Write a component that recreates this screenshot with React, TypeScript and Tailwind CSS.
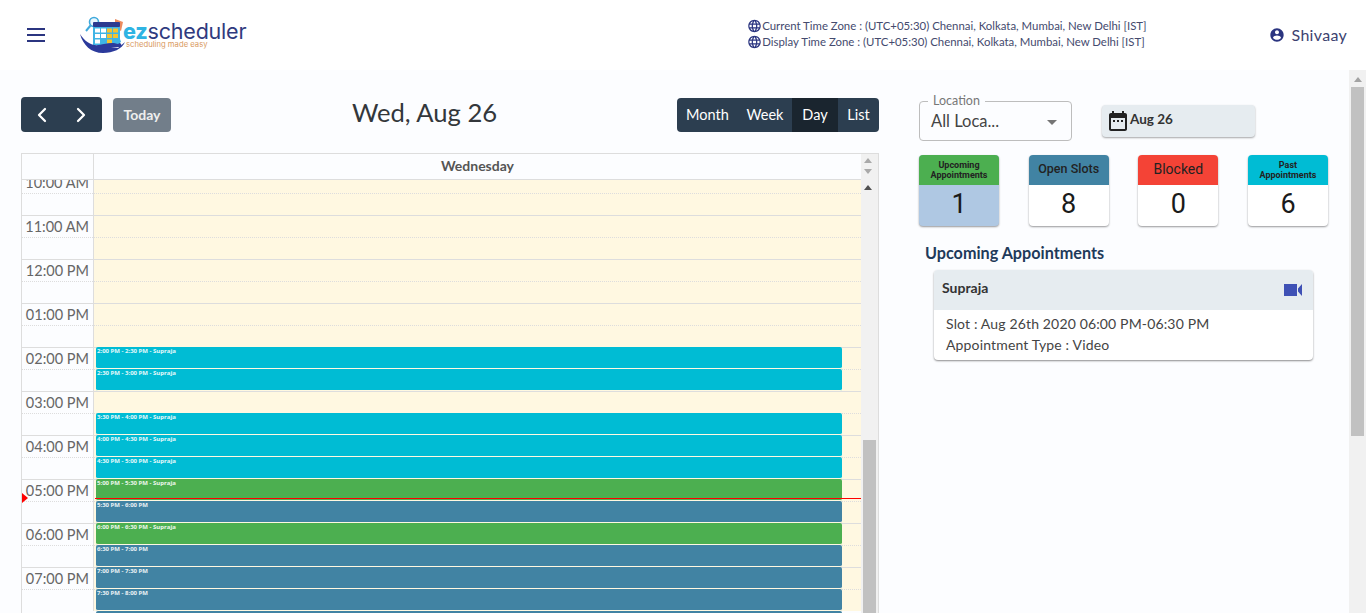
import { ChevronLeft, ChevronRight } from 'lucide-react';

const hours = ['10:00 AM', '11:00 AM', '12:00 PM', '01:00 PM', '02:00 PM', '03:00 PM', '04:00 PM', '05:00 PM', '06:00 PM', '07:00 PM'];

const stats = [
  { title: 'Upcoming Appointments', count: 1, head: 'bg-[#4caf50]', body: 'bg-[#afc8e3]', text: 'px-[8px] text-[9px] font-bold leading-[10px]' },
  { title: 'Open Slots', count: 8, head: 'bg-[#4183a3]', body: 'bg-white', text: 'text-[12.5px] font-medium' },
  { title: 'Blocked', count: 0, head: 'bg-[#f44336]', body: 'bg-white', text: 'text-[14px] font-normal' },
  { title: 'Past Appointments', count: 6, head: 'bg-[#00bcd4]', body: 'bg-white', text: 'px-[8px] text-[9px] font-bold leading-[10px]' },
];

// half hour slots, starting at 2 PM; null leaves the slot empty
const slots = [
  { label: '2:00 PM - 2:30 PM - Supraja', color: 'bg-[#00bcd4]' },
  { label: '2:30 PM - 3:00 PM - Supraja', color: 'bg-[#00bcd4]' },
  null,
  { label: '3:30 PM - 4:00 PM - Supraja', color: 'bg-[#00bcd4]' },
  { label: '4:00 PM - 4:30 PM - Supraja', color: 'bg-[#00bcd4]' },
  { label: '4:30 PM - 5:00 PM - Supraja', color: 'bg-[#00bcd4]' },
  { label: '5:00 PM - 5:30 PM - Supraja', color: 'bg-[#4caf50]' },
  { label: '5:30 PM - 6:00 PM', color: 'bg-[#4183a3]' },
  { label: '6:00 PM - 6:30 PM - Supraja', color: 'bg-[#4caf50]' },
  { label: '6:30 PM - 7:00 PM', color: 'bg-[#4183a3]' },
  { label: '7:00 PM - 7:30 PM', color: 'bg-[#4183a3]' },
  { label: '7:30 PM - 8:00 PM', color: 'bg-[#4183a3]' },
  { label: '', color: 'bg-[#4183a3]' },
];

function GlobeIcon() {
  return (
    <svg viewBox="0 0 24 24" className="h-[16px] w-[15px] shrink-0 fill-[#2b3580]">
      <path d="M11.99 2C6.47 2 2 6.48 2 12s4.47 10 9.99 10C17.52 22 22 17.52 22 12S17.52 2 11.99 2zm6.93 6h-2.95c-.32-1.25-.78-2.45-1.38-3.56 1.84.63 3.37 1.91 4.33 3.56zM12 4.04c.83 1.2 1.48 2.53 1.91 3.96h-3.82c.43-1.43 1.08-2.76 1.91-3.96zM4.26 14C4.1 13.36 4 12.69 4 12s.1-1.36.26-2h3.38c-.08.66-.14 1.32-.14 2s.06 1.34.14 2H4.26zm.82 2h2.95c.32 1.25.78 2.45 1.38 3.56-1.84-.63-3.37-1.9-4.33-3.56zm2.95-8H5.08c.96-1.66 2.49-2.93 4.33-3.56C8.81 5.55 8.35 6.75 8.03 8zM12 19.96c-.83-1.2-1.48-2.53-1.91-3.96h3.82c-.43 1.43-1.08 2.76-1.91 3.96zM14.34 14H9.66c-.09-.66-.16-1.32-.16-2s.07-1.35.16-2h4.68c.09.65.16 1.32.16 2s-.07 1.34-.16 2zm.25 5.56c.6-1.11 1.06-2.31 1.38-3.56h2.95c-.96 1.65-2.49 2.93-4.33 3.56zM16.36 14c.08-.66.14-1.32.14-2s-.06-1.34-.14-2h3.38c.16.64.26 1.31.26 2s-.1 1.36-.26 2h-3.38z" />
    </svg>
  );
}

function Logo() {
  return (
    <div className="flex items-center">
      <svg viewBox="0 0 46 38" className="h-[38px] w-[46px] shrink-0">
        <circle cx="14" cy="6" r="4.5" fill="#eaf7fd" stroke="#3fa9dc" strokeWidth="1.6" />
        <path d="M10.5 9.5 L6 15" stroke="#3fa9dc" strokeWidth="2" />
        <path d="M35 3 L43 6 L41 15 L35 11 Z" fill="#ec8b5e" />
        <rect x="13" y="6" width="27" height="5" rx="1" fill="#2b3a8f" />
        <rect x="13" y="11" width="27" height="18" fill="#3fb4e5" />
        <g fill="#fff">
          <rect x="15" y="12.5" width="5" height="4" />
          <rect x="21" y="12.5" width="5" height="4" />
          <rect x="15" y="18" width="5" height="4" />
          <rect x="21" y="18" width="5" height="4" />
          <rect x="15" y="23.5" width="5" height="4" />
        </g>
        <g fill="#f4c430">
          <rect x="27" y="12.5" width="5" height="4" />
          <rect x="33" y="12.5" width="5" height="4" />
          <rect x="27" y="18" width="5" height="4" />
          <rect x="33" y="18" width="5" height="4" />
          <rect x="27" y="23.5" width="5" height="4" />
        </g>
        <path d="M0 18 C5 26 12 30 19 29 C24 28 27 27 32 27 L39 27 C42 27 42 30 39 31 L31 32 L38 32 L45 26 C42 33 33 37 23 37 C11 37 3 29 0 18 Z" fill="#2b3a9b" />
        <path d="M34 27 L40 23 L41 26 L38 28 Z" fill="#3fb4e5" />
      </svg>
      <div className="-ml-[3px] flex flex-col font-['Inter',sans-serif] leading-none">
        <div className="text-[21.5px] font-normal leading-[20px] tracking-[-0.2px] text-[#2f3a7e]">
          <span className="font-extrabold text-[#2fb4e3]">ez</span>scheduler
        </div>
        <div className="pl-[3px] text-[7.7px] leading-[8px] text-[#d99a62]">scheduling made easy</div>
      </div>
    </div>
  );
}

function TimeGrid() {
  return (
    <div className="relative h-[433px] overflow-hidden">
      {hours.map((hour, i) => (
        <div key={hour} className={`flex h-[44px] border-t border-[#ddd] ${i === 0 ? '-mt-[9px]' : ''}`}>
          <div className="flex w-[72px] shrink-0 flex-col border-r border-[#ddd]">
            <div className="h-[21px] whitespace-nowrap pr-[4px] pt-[1px] text-right text-[14.5px] leading-[20px] text-[#666]">{hour}</div>
            <div className="border-t border-dotted border-[#ddd]" />
          </div>
          <div className="flex-1 bg-[#fff8e1]">
            <div className="mt-[21px] border-t border-dotted border-[#ddd]" />
          </div>
        </div>
      ))}
      <div className="absolute left-[74px] right-[19px] top-[167px] flex flex-col">
        {slots.map((slot, i) =>
          slot ? (
            <div key={i} className={`h-[22px] overflow-hidden rounded-[2px] border-b border-[#fff8e1] pl-[1px] font-['Open_Sans',sans-serif] text-[6px] font-bold leading-[9px] text-white/90 ${slot.color}`}>
              {slot.label}
            </div>
          ) : (
            <div key={i} className="h-[22px]" />
          ),
        )}
      </div>
      {/* now indicator */}
      <div className="absolute left-[73px] right-0 top-[318px] h-px bg-[#ff0000]" />
      <div className="absolute left-0 top-[313px] h-0 w-0 border-y-[5px] border-l-[6px] border-y-transparent border-l-[#ff0000]" />
    </div>
  );
}

export default function App() {
  return (
    <div className="flex h-[613px] w-[1366px] flex-col overflow-hidden bg-white font-['Lato','Open_Sans',sans-serif] text-[#333]">
      <header className="flex h-[70px] shrink-0 items-center pl-[27px] pr-[19px]">
        <div className="flex w-[18px] flex-col gap-[4px]">
          <span className="h-[2px] bg-[#2b3580]" />
          <span className="h-[2px] bg-[#2b3580]" />
          <span className="h-[2px] bg-[#2b3580]" />
        </div>
        <div className="ml-[35px]">
          <Logo />
        </div>
        <div className="ml-auto flex flex-col pb-[2px] text-[11.4px] leading-[16px] text-[#444a6e]">
          <div className="flex items-center"><GlobeIcon />Current Time Zone : (UTC+05:30) Chennai, Kolkata, Mumbai, New Delhi [IST]</div>
          <div className="flex items-center"><GlobeIcon />Display Time Zone : (UTC+05:30) Chennai, Kolkata, Mumbai, New Delhi [IST]</div>
        </div>
        <div className="ml-[122px] flex items-center gap-[7px] text-[16px] tracking-[0.3px] text-[#3c4270]">
          <svg viewBox="0 0 24 24" className="h-[16px] w-[16px] fill-[#2b3580]">
            <path d="M12 2C6.48 2 2 6.48 2 12s4.48 10 10 10 10-4.48 10-10S17.52 2 12 2zm0 3c1.66 0 3 1.34 3 3s-1.34 3-3 3-3-1.34-3-3 1.34-3 3-3zm0 14.2c-2.5 0-4.71-1.28-6-3.22.03-1.99 4-3.08 6-3.08 1.99 0 5.97 1.09 6 3.08-1.29 1.94-3.5 3.22-6 3.22z" />
          </svg>
          Shivaay
        </div>
      </header>

      <div className="flex min-h-0 flex-1 bg-[#fcfdff]">
        <main className="w-[898px] shrink-0 pl-[21px] pr-[19px] pt-[27px]">
          <div className="flex h-[35px] items-center justify-between">
            <div className="flex w-[150px] items-center gap-[11px]">
              <div className="flex h-[35px] w-[81px] items-center justify-between rounded-[4px] bg-[#2c3e50] px-[9px] text-white">
                <ChevronLeft size={24} strokeWidth={2.25} />
                <ChevronRight size={24} strokeWidth={2.25} />
              </div>
              <div className="flex h-[34px] w-[58px] items-center justify-center rounded-[4px] bg-[#727e8a] text-[14px] font-bold text-[#eee]">Today</div>
            </div>
            <h1 className="pb-[4px] pl-[1px] text-[25.6px] font-normal leading-none text-[#33373b]">Wed, Aug 26</h1>
            <div className="flex h-[34px] overflow-hidden rounded-[4px] bg-[#2c3e50] text-[14.5px] text-white">
              <div className="flex w-[61px] items-center justify-center">Month</div>
              <div className="flex w-[54px] items-center justify-center">Week</div>
              <div className="flex w-[46px] items-center justify-center bg-[#1a252f]">Day</div>
              <div className="flex w-[41px] items-center justify-center">List</div>
            </div>
          </div>

          <div className="mt-[21px] flex h-[460px] border border-b-0 border-[#ddd]">
            <div className="min-w-0 flex-1">
              <div className="flex h-[26px] border-b border-[#ddd]">
                <div className="w-[72px] shrink-0 border-r border-[#ddd]" />
                <div className="flex-1 text-center text-[14px] font-bold leading-[24px] text-[#555]">Wednesday</div>
              </div>
              <TimeGrid />
            </div>
            <div className="relative w-[17px] shrink-0 bg-[#f1f1f1]">
              <div className="ml-[3px] mt-[4px] h-0 w-0 border-x-[4px] border-b-[5px] border-x-transparent border-b-[#a9a9a9]" />
              <div className="ml-[3px] mt-[6px] h-0 w-0 border-x-[4px] border-t-[5px] border-x-transparent border-t-[#a9a9a9]" />
              <div className="ml-[3px] mt-[11px] h-0 w-0 border-x-[4px] border-b-[5px] border-x-transparent border-b-[#505050]" />
              <div className="absolute bottom-0 left-[2px] h-[173px] w-[13px] bg-[#c1c1c1]" />
            </div>
          </div>
        </main>

        <aside className="min-w-0 flex-1 pl-[21px] pr-[21px] pt-[31px]">
          <div className="flex items-start">
            <div className="relative h-[40px] w-[153px] rounded-[4px] border border-[#bdbdbd] pl-[11px] pt-[7px] text-[16.5px] leading-[24px] text-[#444]">
              All Loca...
              <span className="absolute -top-[8px] left-[8px] bg-[#fcfdff] px-[5px] text-[12.5px] leading-[14px] text-[#777]">Location</span>
              <span className="absolute right-[14px] top-[18px] h-0 w-0 border-x-[5px] border-t-[5px] border-x-transparent border-t-[#757575]" />
            </div>
            <div className="ml-[30px] mt-[4px] flex h-[32px] w-[153px] items-start rounded-[4px] bg-[#e6ecf0] pl-[4px] pt-[4px] text-[13.5px] font-bold leading-[20px] text-[#333] shadow-[0_1px_2px_rgba(0,0,0,0.35)]">
              <svg viewBox="0 0 24 24" className="h-[24px] w-[24px] shrink-0 fill-[#222]">
                <path d="M9 11H7v2h2v-2zm4 0h-2v2h2v-2zm4 0h-2v2h2v-2zm2-7h-1V2h-2v2H8V2H6v2H5c-1.11 0-1.99.9-1.99 2L3 20c0 1.1.89 2 2 2h14c1.1 0 2-.9 2-2V6c0-1.1-.9-2-2-2zm0 16H5V9h14v11z" />
              </svg>
              Aug 26
            </div>
          </div>

          <div className="mt-[14px] flex justify-between">
            {stats.map((stat) => (
              <div key={stat.title} className={`w-[80px] overflow-hidden rounded-[4px] shadow-[0_1px_2px_rgba(0,0,0,0.4)] ${stat.body}`}>
                <div className={`flex h-[30px] items-center justify-center pb-[1px] text-center font-['Roboto',sans-serif] text-[#222] ${stat.head} ${stat.text}`}>
                  {stat.title}
                </div>
                <div className="flex h-[41px] items-center justify-center pb-[2px] font-['Roboto',sans-serif] text-[27px] text-[#1a1a1a]">{stat.count}</div>
              </div>
            ))}
          </div>

          <h2 className="ml-[6px] mt-[17px] text-[16.2px] font-bold leading-[20px] text-[#1f3a5a]">Upcoming Appointments</h2>

          <div className="ml-[15px] mt-[7px] w-[379px] overflow-hidden rounded-[4px] bg-white shadow-[0_1px_2px_rgba(0,0,0,0.45)]">
            <div className="flex h-[40px] items-center justify-between bg-[#e6ecf0] pb-[5px] pl-[8px] pr-[11px] text-[14px] font-bold text-[#333]">
              Supraja
              <svg viewBox="0 0 18 12" className="mt-[5px] h-[12px] w-[18px] fill-[#3f51b5]">
                <path d="M0 0h13v12H0zM14 4.5 18 0v12l-4-4.5z" />
              </svg>
            </div>
            <div className="pb-[5px] pl-[12px] pt-[3px] text-[14px] leading-[21px] tracking-[0.15px] text-[#444]">
              <div>Slot : Aug 26th 2020 06:00 PM-06:30 PM</div>
              <div>Appointment Type : Video</div>
            </div>
          </div>
        </aside>

        <div className="flex w-[17px] shrink-0 flex-col items-center bg-[#f1f1f1]">
          <div className="mt-[7px] h-0 w-0 shrink-0 border-x-[4px] border-b-[5px] border-x-transparent border-b-[#a3a3a3]" />
          <div className="mt-[5px] h-[349px] w-[13px] bg-[#c1c1c1]" />
        </div>
      </div>
    </div>
  );
}
